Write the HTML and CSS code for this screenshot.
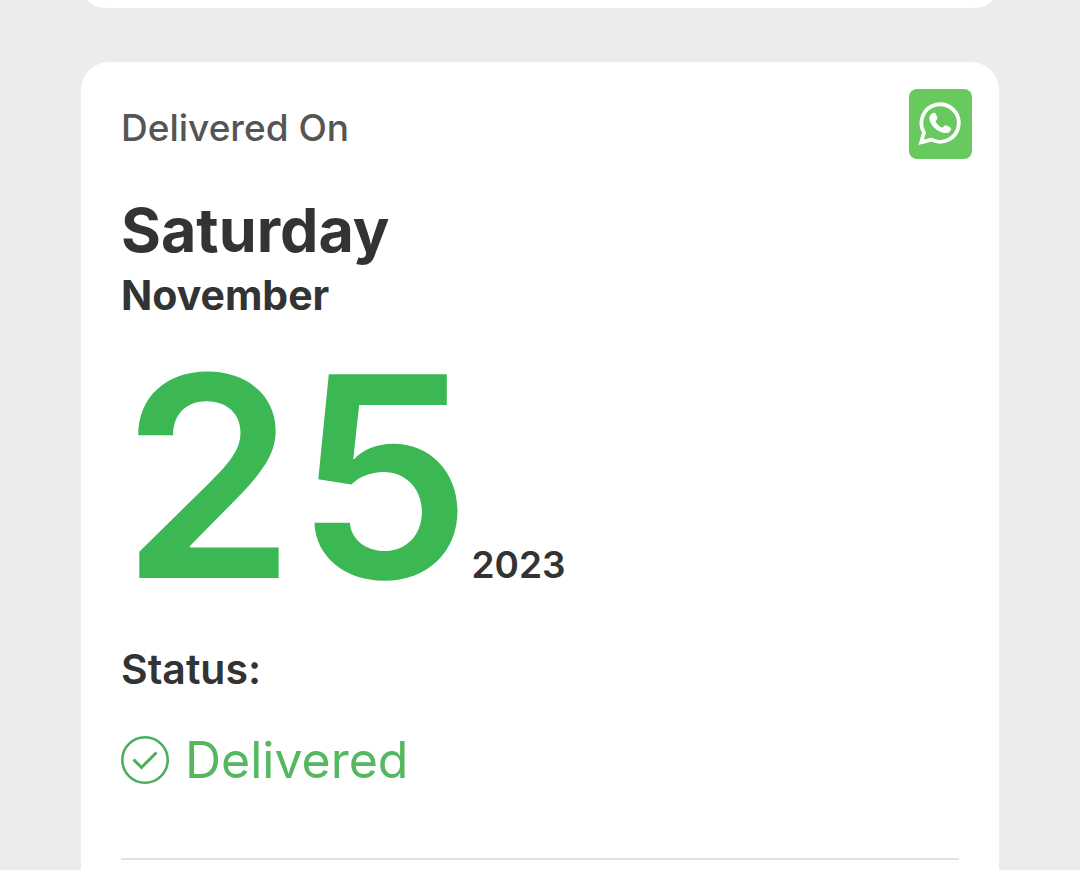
FILE: index.html
```html
<!DOCTYPE html>
<html lang="en">
<head>
    <meta charset="UTF-8">
    <meta name="viewport" content="width=device-width, initial-scale=1.0">
    <title>Delivery Status</title>
    <link rel="stylesheet" href="styles.css">
</head>
<body>
    <main>
        <section class="card previous-card"></section>

        <section class="card">
            <header class="card-header">
                <h2>Delivered On</h2>
                <a class="whatsapp" href="#" aria-label="WhatsApp">
                    <svg viewBox="0 0 63 70">
                        <path d="M12.2 53.3 L15 43.5 A18.7 18.7 0 1 1 22.5 50.6 Z" fill="none" stroke="#fff" stroke-width="3.8" stroke-linejoin="miter"/>
                        <path d="M23 24.5 C24 23.5 26 23.2 26.7 24.8 L28.3 28.6 C28.8 30 27 31.3 26.5 32.4 C28 35.3 30.3 37.4 33.5 38.7 C34.7 38 35.7 35.8 37 36.3 L41 38.2 C42.6 39 42 41 41 42.3 C38.7 45 34.5 44.3 31 42.7 C26 40.3 22.5 36.5 20.8 32 C19.7 29 20.5 26.4 23 24.5 Z" fill="#fff"/>
                    </svg>
                </a>
            </header>

            <div class="card-body">
                <div class="weekday">Saturday</div>
                <div class="month">November</div>
                <div class="date">
                    <span class="day">25</span>
                    <span class="year">2023</span>
                </div>

                <h3>Status:</h3>
                <div class="status">
                    <svg class="check" viewBox="0 0 48 48">
                        <circle cx="24" cy="24" r="22.7"/>
                        <path d="M12.5 23.5 L20.5 31.5 L35.5 16.5" stroke-width="3"/>
                    </svg>
                    <span>Delivered</span>
                </div>
                <hr>
            </div>
        </section>
    </main>
</body>
</html>
```
FILE: styles.css
```css
* {
    box-sizing: border-box;
}

body {
    margin: 0;
    min-height: 100vh;
    background-color: #ececec;
    color: #333333;
    font-family: Inter, "Liberation Sans", sans-serif;
    display: flex;
    flex-direction: column;
    overflow-x: hidden;
}

main {
    width: 85%;
    margin: 0 auto;
    flex: 1;
    display: flex;
    flex-direction: column;
    gap: 54px;
}

.card {
    flex: 1;
    background-color: white;
    border-radius: 28px 28px 0 0;
}

/* only the bottom edge of the card above shows */
.previous-card {
    flex: none;
    height: 48px;
    margin-top: -40px;
    border-radius: 28px;
}

.card-header {
    display: flex;
    justify-content: space-between;
    align-items: flex-end;
    padding: 27px 27px 0 40px;
}

.card-header h2 {
    margin: 0;
    color: #555555;
    font-size: 37px;
    line-height: 62px;
    font-weight: 500;
}

.whatsapp {
    width: 63px;
    height: 70px;
    background-color: #67c95e;
    border-radius: 8px;
}

.whatsapp svg {
    display: block;
}

.card-body {
    padding: 32px 40px 10px;
}

.weekday {
    font-size: 61px;
    line-height: 78px;
    font-weight: 700;
}

.month {
    font-size: 41px;
    line-height: 52px;
    font-weight: 700;
}

.date {
    display: flex;
    align-items: baseline;
    margin-top: 16px;
}

.day {
    color: #3bb754;
    font-size: 280px;
    line-height: 280px;
    font-weight: 600;
}

.year {
    font-size: 37px;
    line-height: 52px;
    font-weight: 600;
}

h3 {
    margin: 26px 0 32px;
    font-size: 41px;
    line-height: 52px;
    font-weight: 600;
}

.status {
    display: flex;
    align-items: center;
    gap: 16px;
    color: #55b760;
    font-size: 50px;
    line-height: 66px;
}

.check {
    width: 48px;
    height: 48px;
    fill: none;
    stroke: #4cae5c;
    stroke-width: 2.6;
}

hr {
    margin: 65px 0 0;
    border: none;
    border-top: 2px solid #e2e2e2;
}
```
